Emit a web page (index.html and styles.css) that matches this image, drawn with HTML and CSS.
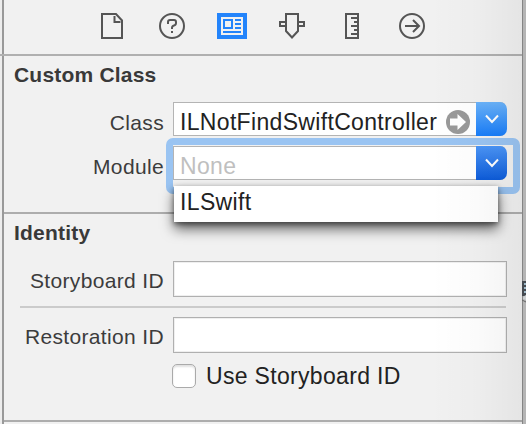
FILE: index.html
```html
<!DOCTYPE html>
<html lang="en">
<head>
<meta charset="utf-8">
<title>Identity Inspector</title>
<link rel="stylesheet" href="styles.css">
</head>
<body>
<main class="inspector">
  <nav class="tabs">
    <svg class="tab" width="30" height="26" viewBox="0 0 30 26"><path d="M5 1H19L25 7.5V25H5ZM17.5 3V9H23.5"/></svg>
    <svg class="tab" width="30" height="26" viewBox="0 0 30 26"><circle cx="15" cy="13" r="12"/><path d="M11 11V9Q11 7 13 7H17Q19 7 19 9V10Q19 12 17 12.5Q15 13 15 15V16M15 18V20"/></svg>
    <svg class="tab tab-active" width="30" height="26" viewBox="0 0 30 26"><rect class="sheet" x="4" y="4" width="22" height="18"/><path d="M7 7H15V15H7ZM18 7H24M18 11H24M18 15H24M6 19H24"/></svg>
    <svg class="tab" width="30" height="26" viewBox="0 0 30 26"><path d="M9 1H21V18L15 24.5L9 18ZM8 9H3V13H8M22 9H27V13H22"/></svg>
    <svg class="tab" width="30" height="26" viewBox="0 0 30 26"><path d="M9 1H21V25H9Z"/><path d="M14 5H20M17 9H20M14 13H20M17 17H20M14 21H20"/></svg>
    <svg class="tab" width="30" height="26" viewBox="0 0 30 26"><circle cx="15" cy="13" r="12"/><path d="M8 13H22M16 7L22 13L16 19"/></svg>
  </nav>

  <section class="section custom-class">
    <h2 class="heading">Custom Class</h2>
    <div class="row combo-row">
      <label class="label">Class</label>
      <div class="combo">
        <span class="value">ILNotFindSwiftController</span>
        <svg class="jump" width="24" height="24" viewBox="0 0 24 24"><circle cx="12" cy="12" r="12"/><path d="M4 8.5H11.5V4L20 12L11.5 20V15.5H4Z"/></svg>
        <span class="arrow"><svg width="14" height="10" viewBox="0 0 14 10"><path d="M1 1.5L7 8L13 1.5"/></svg></span>
      </div>
    </div>
    <div class="row combo-row">
      <label class="label">Module</label>
      <div class="combo focused">
        <span class="value placeholder">None</span>
        <span class="arrow arrow-pressed"><svg width="14" height="10" viewBox="0 0 14 10"><path d="M1 1.5L7 8L13 1.5"/></svg></span>
        <div class="menu">ILSwift</div>
      </div>
    </div>
  </section>

  <section class="section identity">
    <h2 class="heading heading-identity">Identity</h2>
    <div class="row id-row">
      <label class="label">Storyboard ID</label>
      <div class="field"></div>
    </div>
    <hr class="divider">
    <div class="row id-row">
      <label class="label">Restoration ID</label>
      <div class="field"></div>
    </div>
    <div class="check-row"><span class="checkbox"></span><span class="check-label">Use Storyboard ID</span></div>
  </section>
</main>
<aside class="edge">
  <svg class="edge-mark" width="4" height="22" viewBox="0 0 4 22"><path class="dark" d="M0 0H4V15H0Z"/><path class="stripe" d="M2 3H4M2 7H4M2 11H4"/><path class="curve" d="M1 18Q1 15 4 14V19Z"/><path class="tail" d="M0 19L4 21"/></svg>
</aside>
</body>
</html>
```
FILE: styles.css
```css
* { box-sizing: border-box; }

body {
  margin: 0;
  width: 526px;
  height: 424px;
  overflow: hidden;
  display: flex;
  background: #f1f1f1;
  font-family: "Liberation Sans", Arial, sans-serif;
  color: #222;
}

.inspector {
  position: relative;
  width: 522px;
  height: 424px;
  flex: none;
  padding-left: 4px;
  background: linear-gradient(90deg, #ededed 2px, #999 2px, #999 4px, #f1f1f1 4px);
}

/* Shade that falls across the right side of the panel */
.inspector::after {
  content: "";
  position: absolute;
  inset: 0 0 0 auto;
  width: 92px;
  background: linear-gradient(90deg, rgba(0, 0, 0, 0), rgba(0, 0, 0, 0.015) 50%, rgba(0, 0, 0, 0.05));
  pointer-events: none;
  z-index: 5;
}

.tabs {
  display: flex;
  gap: 30px;
  height: 56px;
  margin-left: -4px;
  padding: 13px 0 0 97px;
  border-bottom: 2px solid #b0b0b0;
}

.tab {
  fill: none;
  stroke: #555;
  stroke-width: 2;
}

.tab-active {
  background: #2384fb;
  stroke: #2384fb;
}

.sheet {
  fill: #f1f1f1;
  stroke: none;
}

.section {
  border-bottom: 2px solid #adadad;
}

.custom-class { height: 158px; }
.identity { height: 208px; }

.heading {
  margin: 0;
  height: 46px;
  padding: 7px 0 0 10px;
  font-size: 21px;
  line-height: 24px;
  letter-spacing: 0.2px;
  color: #393939;
}

.heading-identity { height: 47px; }

.row {
  display: flex;
}

.combo-row {
  height: 34px;
  margin-bottom: 10px;
}

.label {
  width: 169px;
  flex: none;
  padding-right: 9px;
  text-align: right;
  white-space: nowrap;
  font-size: 21px;
  line-height: 24px;
  letter-spacing: 0.35px;
  color: #3c3c3c;
}

.combo-row .label { padding-top: 9px; }
.id-row .label { padding-top: 8px; }

.combo {
  position: relative;
  display: flex;
  width: 334px;
  height: 34px;
  border: 1px solid #b4b4b4;
  border-right-color: transparent;
  border-radius: 0 7px 7px 0;
  background: #fff;
}

.value {
  flex: 1;
  padding: 6px 0 0 6px;
  white-space: nowrap;
  font-size: 23px;
  line-height: 26px;
  letter-spacing: 0.33px;
}

.placeholder { color: #bfbfbf; }

.jump {
  flex: none;
  margin: 7px 7px 0 0;
  fill: #999;
}

.jump path { fill: #fff; }

.arrow {
  display: flex;
  flex: none;
  align-items: center;
  justify-content: center;
  width: 31px;
  height: 34px;
  margin: -1px;
  border-radius: 0 7px 7px 0;
  background: linear-gradient(#6bb3fa, #187dfa);
}

.arrow-pressed { background: linear-gradient(#4b95f7, #0d5cda); }

.arrow svg {
  fill: none;
  stroke: #fff;
  stroke-width: 2;
}

.focused::before {
  content: "";
  position: absolute;
  inset: -9px -14px -15px -8px;
  border: 7px solid #9ac4f2;
  border-radius: 7px;
}

.menu {
  position: absolute;
  z-index: 2;
  top: 39px;
  left: 0;
  width: 324px;
  height: 36px;
  padding: 2px 0 0 6px;
  background: #fff;
  box-shadow: 0 7px 13px rgba(0, 0, 0, 0.6), 0 2px 5px rgba(0, 0, 0, 0.45);
  font-size: 23px;
  line-height: 28px;
  letter-spacing: 0.35px;
}

.field {
  width: 334px;
  height: 36px;
  border: 1px solid #b0b0b0;
  box-shadow: inset 0 0 0 1px #efefef;
  background: #fff;
}

.divider {
  width: 486px;
  height: 2px;
  margin: 9px 0 9px 16px;
  border: 0;
  background: #cbcbcb;
}

.check-row {
  display: flex;
  padding: 11px 0 0 168px;
}

.checkbox {
  width: 24px;
  height: 24px;
  border: 1px solid #aaa;
  border-radius: 5px;
  background: #fff;
  box-shadow: inset 0 2px 2px rgba(0, 0, 0, 0.12);
}

.check-label {
  margin-left: 10px;
  font-size: 23px;
  line-height: 25px;
  letter-spacing: 0.32px;
}

.edge {
  width: 4px;
  padding-top: 281px;
  background: linear-gradient(90deg, #858585 1px, #b5b5b5 1px);
}

.edge-mark { display: block; fill: none; }
.dark { fill: #454a50; }
.stripe { stroke: #9fb9c8; stroke-width: 2; }
.curve { fill: #ccd0d2; }
.tail { stroke: #666; }
```
